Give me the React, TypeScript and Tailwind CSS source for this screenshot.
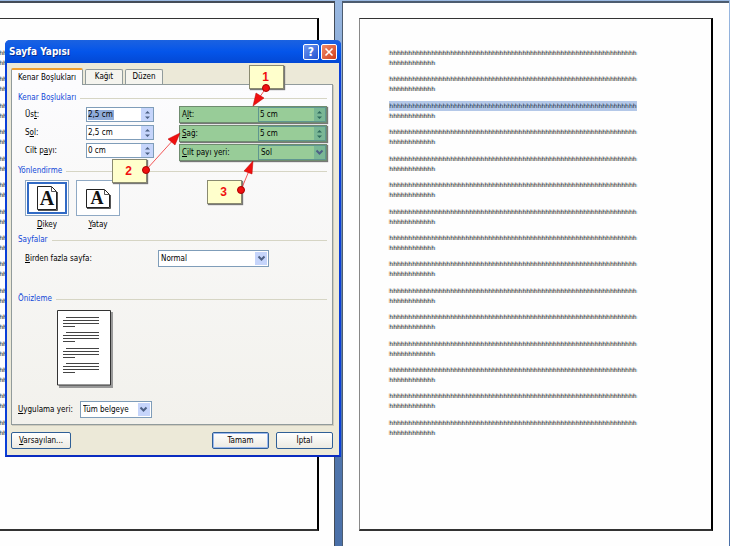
import React from "react";

const LONG = "h".repeat(65);
const SHORT = "h".repeat(12);

function Paper({ highlighted }: { highlighted?: number }) {
  return (
    <div className="mt-[15px] h-[513px] w-[354px] shrink-0 border-t border-r-2 border-b-2 border-l border-t-[#333] border-r-black border-b-[#333] border-l-[#888] pt-[29px] pl-[29px]">
      <div className="flex h-[390px] flex-col justify-between font-['DejaVu_Sans',sans-serif] text-[6px] leading-[10px] text-[#0a1c34] [text-shadow:-1px_0_#fbd5ae,1px_0_#bcdcf3]">
        {Array.from({ length: 15 }, (_, i) => (
          <p key={i} className="whitespace-nowrap">
            <span className={i === highlighted ? "block w-[248px] bg-[#b4c8e8] [text-shadow:none]" : "block w-[248px]"}>{LONG}</span>
            <span className="block">{SHORT}</span>
          </p>
        ))}
      </div>
    </div>
  );
}

function Legend({ children }: { children: React.ReactNode }) {
  return (
    <h2 className="flex h-[12px] items-center gap-1 text-[#1048d8]">
      {children}
      <span className="h-px flex-1 bg-[#d6d5c4]" />
    </h2>
  );
}

function Chevron() {
  return (
    <svg viewBox="0 0 9 7" className="h-[7px] w-[9px]">
      <path d="M1.5 1.5 L4.5 4.5 L7.5 1.5" fill="none" stroke="#4d6185" strokeWidth="2" />
    </svg>
  );
}

function Arrows({ color }: { color: string }) {
  return (
    <svg viewBox="0 0 7 10" className="h-[10px] w-[7px]">
      <path d="M1 3.5 L3.5 1 L6 3.5 Z M1 6.5 L3.5 9 L6 6.5 Z" fill={color} />
    </svg>
  );
}

function Spin({ id, value, selected }: { id: string; value: string; selected?: boolean }) {
  return (
    <span className="flex h-[15px] w-[68px] border border-[#7f9db9] bg-white">
      <span className="flex min-w-0 flex-1 items-center pl-px">
        <input
          id={id}
          defaultValue={value}
          className={selected ? "h-[10px] w-[26px] bg-[#8facd9] outline-none" : "h-[11px] w-full bg-transparent outline-none"}
        />
      </span>
      <span className="flex w-[12px] items-center justify-center bg-[#c6d5fb]">
        <Arrows color="#4d6185" />
      </span>
    </span>
  );
}

function GreenSpin({ id, value }: { id: string; value: string }) {
  return (
    <span className="flex h-[15px] w-[68px] border border-[#5f9690]">
      <input id={id} defaultValue={value} className="min-w-0 flex-1 bg-transparent pl-px outline-none" />
      <span className="flex w-[11px] items-center justify-center bg-[#7ab795]">
        <Arrows color="#2f6a5c" />
      </span>
    </span>
  );
}

function Drop({ id, value, className }: { id: string; value: string; className: string }) {
  return (
    <span className={"relative flex h-[17px] border border-[#7f9db9] bg-white " + className}>
      <select id={id} className="w-full appearance-none bg-transparent pl-[2px] outline-none">
        <option>{value}</option>
      </select>
      <span className="pointer-events-none absolute inset-y-px right-px flex w-[12px] items-center justify-center bg-[#c6d5fb]">
        <Chevron />
      </span>
    </span>
  );
}

function U({ children }: { children: React.ReactNode }) {
  return <span className="underline underline-offset-1">{children}</span>;
}

function Orientation({ landscape }: { landscape?: boolean }) {
  return (
    <svg viewBox="0 0 26 26" className="h-[26px] w-[26px]">
      <path
        d={landscape ? "M1.5 4.5 H19.5 L24.5 9.5 V22.5 H1.5 Z" : "M3.5 1.5 H17.5 L22.5 6.5 V24.5 H3.5 Z"}
        fill="#fff"
        stroke="#222"
      />
      <path
        d={landscape ? "M2 23.5 H25.5 V10 M19.5 4.5 V9.5 H24.5" : "M4 25.5 H23.5 V7 M17.5 1.5 V6.5 H22.5"}
        fill="none"
        stroke="#555"
      />
      <text x={landscape ? 12 : 13} y={landscape ? 19 : 20} textAnchor="middle" fontFamily="Liberation Serif, serif" fontWeight="bold" fontSize={landscape ? 18 : 20} fill="#111">
        A
      </text>
    </svg>
  );
}

function Callout({ children, className }: { children: React.ReactNode; className: string }) {
  return (
    <div
      className={
        "absolute flex h-[24px] w-[35px] items-center justify-center border border-[#8a8a70] bg-[#ffffcc] pr-[2px] text-[12px] font-bold text-[#f01010] shadow-[1px_1px_1px_#777] font-['Liberation_Sans',sans-serif] " +
        className
      }
    >
      {children}
    </div>
  );
}

const GREEN_ROW = "flex items-center justify-between border border-[#6f8c6f] bg-[#98cc98] pl-[2px] shadow-[1px_1px_1px_#777]";
const TAB = "h-[15px] w-[38px] rounded-t-[2px] border border-b-0 border-[#919b9c] bg-[#f5f4ee]";
const BUTTON = "h-[17px] rounded-[2px] border border-[#2f5f96] bg-linear-to-b from-white to-[#eceae2]";

function Dialog() {
  return (
    <section className="absolute top-[40px] left-[5px] w-[336px] rounded-t-[5px] border-x-2 border-b-2 border-x-[#0b3fd8] border-b-[#0a2cc0] bg-[#ece9d8] font-['DejaVu_Sans_Condensed','DejaVu_Sans',sans-serif] text-[8px] leading-[12px] text-black">
      <header className="-mx-[2px] flex h-[23px] items-center gap-[2px] rounded-t-[5px] bg-linear-to-b from-[#1b62e0] via-[#0455ea] to-[#0348d4] pr-[4px] pl-[4px]">
        <h1 className="flex-1 text-[10px] font-bold text-white [text-shadow:1px_1px_#0a2f90]">Sayfa Yapısı</h1>
        <button aria-label="Yardım" className="flex h-[16px] w-[16px] items-center justify-center rounded-[2px] border border-white bg-linear-to-br from-[#6f97f0] to-[#2450d0] text-[12px] font-bold text-white">
          ?
        </button>
        <button aria-label="Kapat" className="flex h-[16px] w-[16px] items-center justify-center rounded-[2px] border border-white bg-linear-to-br from-[#f08a68] to-[#d03c14]">
          <svg viewBox="0 0 10 10" className="h-[10px] w-[10px]">
            <path d="M1.5 1.5 L8.5 8.5 M8.5 1.5 L1.5 8.5" stroke="#fff" strokeWidth="1.6" />
          </svg>
        </button>
      </header>

      <div className="pt-[5px] pr-[6px] pb-[6px] pl-[4px]">
        <div role="tablist" className="relative flex items-end gap-[2px]">
          <button role="tab" aria-selected="true" className="-mb-px h-[17px] w-[72px] rounded-t-[2px] border border-t-2 border-b-0 border-[#919b9c] border-t-[#f0a030] bg-[#fcfcfe]">
            Kenar Boşlukları
          </button>
          <button role="tab" className={TAB}>Kağıt</button>
          <button role="tab" className={TAB}>Düzen</button>
        </div>

        <div className="h-[341px] border border-[#919b9c] bg-linear-to-b from-[#fcfcfe] to-[#f2f1ec] pt-[7px] pr-[5px] pl-[6px] shadow-[1px_1px_#cfccbe]">
          <Legend>Kenar Boşlukları</Legend>
          <div className="mt-[2px] flex justify-between pl-[7px]">
            <div className="flex w-[129px] flex-col gap-[3px] pt-px">
              <div className="flex items-center justify-between">
                <label htmlFor="top">Üs<U>t</U>:</label>
                <Spin id="top" value="2,5 cm" selected />
              </div>
              <div className="flex items-center justify-between">
                <label htmlFor="left">S<U>o</U>l:</label>
                <Spin id="left" value="2,5 cm" />
              </div>
              <div className="flex items-center justify-between">
                <label htmlFor="gutter">Cilt p<U>a</U>yı:</label>
                <Spin id="gutter" value="0 cm" />
              </div>
            </div>
            <div className="flex w-[148px] flex-col gap-[2px]">
              <div className={GREEN_ROW}>
                <label htmlFor="bottom">A<U>l</U>t:</label>
                <GreenSpin id="bottom" value="5 cm" />
              </div>
              <div className={GREEN_ROW}>
                <label htmlFor="right"><U>S</U>ağ:</label>
                <GreenSpin id="right" value="5 cm" />
              </div>
              <div className={GREEN_ROW}>
                <label htmlFor="gutterpos"><U>C</U>ilt payı yeri:</label>
                <span className="relative flex h-[15px] w-[68px] border border-[#5f9690]">
                  <select id="gutterpos" className="w-full appearance-none bg-transparent pl-[2px] outline-none">
                    <option>Sol</option>
                  </select>
                  <span className="pointer-events-none absolute inset-y-0 right-0 flex w-[11px] items-center justify-center bg-[#7ab795]">
                    <Chevron />
                  </span>
                </span>
              </div>
            </div>
          </div>

          <div className="mt-[4px]">
            <Legend>Yönlendirme</Legend>
          </div>
          <div className="mt-[3px] flex gap-[7px] pl-[7px]">
            <button className="flex w-[44px] flex-col items-center">
              <span className="flex h-[36px] w-[44px] items-center justify-center border border-[#8fa9c4] bg-white">
                <span className="flex h-[32px] w-[40px] items-center justify-center border-2 border-[#316ac5]">
                  <Orientation />
                </span>
              </span>
              <span className="mt-[3px]"><U>D</U>ikey</span>
            </button>
            <button className="flex w-[44px] flex-col items-center">
              <span className="flex h-[36px] w-[44px] items-center justify-center border border-[#8fa9c4] bg-white">
                <Orientation landscape />
              </span>
              <span className="mt-[3px]"><U>Y</U>atay</span>
            </button>
          </div>

          <div className="mt-[3px]">
            <Legend>Sayfalar</Legend>
          </div>
          <div className="mt-[4px] flex items-center pl-[7px]">
            <label htmlFor="multi" className="w-[133px]"><U>B</U>irden fazla sayfa:</label>
            <Drop id="multi" value="Normal" className="w-[111px]" />
          </div>

          <div className="mt-[26px]">
            <Legend>Önizleme</Legend>
          </div>
          <svg viewBox="0 0 58 80" className="mt-[4px] ml-[38px] h-[80px] w-[58px]">
            <path d="M3 3 H57 V79 H3 Z" fill="#999" />
            <path d="M1.5 1.5 H54.5 V76 H1.5 Z" fill="#fff" stroke="#333" />
            {[8, 23, 39, 54].map((y) => (
              <path key={y} d={`M10 ${y}.5 H43 M7 ${y + 3}.5 H43 M7 ${y + 6}.5 H43 M7 ${y + 9}.5 H19`} stroke="#444" />
            ))}
          </svg>
          <div className="mt-[12px] flex items-center gap-[7px]">
            <label htmlFor="apply"><U>U</U>ygulama yeri:</label>
            <Drop id="apply" value="Tüm belgeye" className="w-[72px]" />
          </div>
        </div>

        <footer className="mt-[7px] flex gap-[7px]">
          <button className={BUTTON + " w-[60px]"}><U>V</U>arsayılan...</button>
          <span className="flex-1" />
          <button className={BUTTON + " w-[57px] shadow-[inset_0_0_0_1px_#9db9ee]"}>Tamam</button>
          <button className={BUTTON + " w-[57px]"}>İptal</button>
        </footer>
      </div>

      <Callout className="top-[25px] left-[242px]">1</Callout>
      <Callout className="top-[119px] left-[105px]">2</Callout>
      <Callout className="top-[140px] left-[200px]">3</Callout>
      <svg viewBox="0 0 334 200" className="pointer-events-none absolute top-0 left-0 h-[200px] w-[334px]">
        <g fill="#f01010" stroke="#f01010">
          <path d="M259 48 L250 61 M139 130 L168 98 M234 150 L244 126" fill="none" strokeOpacity=".7" />
          <path d="M246 66 L249 53 L257 58 Z M173 93 L168 105 L161 99 Z M246 121 L245 134 L237 131 Z" stroke="#b00" strokeWidth=".5" />
          <circle cx="259" cy="48" r="3.5" stroke="#a00" />
          <circle cx="139" cy="130" r="3.5" stroke="#a00" />
          <circle cx="234" cy="150" r="3.5" stroke="#a00" />
        </g>
      </svg>
    </section>
  );
}

export default function App() {
  return (
    <main className="relative flex h-screen gap-[7px] overflow-hidden bg-linear-to-b from-[#9ab9e2] via-[#5b7fb2] to-[#4a70a8] pt-[1px] pr-px">
      <div className="flex w-[46%] justify-end overflow-hidden border-t-2 border-r border-[#444c58] bg-[#fefefe] pr-[15px]">
        <Paper />
      </div>
      <div className="min-w-0 flex-1 overflow-hidden border-t-2 border-l border-[#4c5c70] bg-[#fefefe] pl-[16px]">
        <Paper highlighted={2} />
      </div>
      <Dialog />
    </main>
  );
}
